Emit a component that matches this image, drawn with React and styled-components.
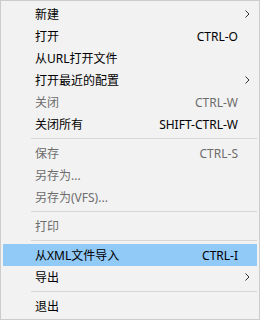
import React from 'react';
import styled, { createGlobalStyle } from 'styled-components';

const GlobalStyle = createGlobalStyle`
  body {
    margin: 0;
    background: #ffffff;
  }
`;

const Menu = styled.ul`
  box-sizing: border-box;
  width: 260px;
  height: 320px;
  margin: 0;
  padding: 2px;
  list-style: none;
  background: #f2f2f2;
  border: 1px solid #cccccc;
  font-family: "Noto Sans", "Noto Sans CJK SC", sans-serif;
  font-size: 12px;
`;

const Item = styled.li`
  display: grid;
  grid-template-columns: 1fr auto 19px;
  align-items: center;
  height: 22px;
  padding-left: 32px;
  color: ${p => (p.$disabled ? '#6d6d6d' : '#000000')};
  background: ${p => (p.$active ? '#91c9f7' : 'transparent')};
  cursor: default;
`;

const Label = styled.span`
  white-space: nowrap;
`;

const Shortcut = styled.span`
  white-space: nowrap;
  text-align: right;
`;

const Arrow = styled.span`
  display: flex;
  align-items: center;
  justify-content: flex-start;
  padding-left: 7px;
`;

const Separator = styled.li`
  height: 1px;
  margin: 3px 0 3px 28px;
  background: #d7d7d7;
`;

const Chevron = () => (
  <svg width="5" height="8" viewBox="0 0 5 8">
    <path d="M0.5 0.5 L4 4 L0.5 7.5" fill="none" stroke="#333" strokeWidth="1" />
  </svg>
);

const items = [
  { label: '新建', sub: true },
  { label: '打开', shortcut: 'CTRL-O' },
  { label: '从URL打开文件' },
  { label: '打开最近的配置', sub: true },
  { label: '关闭', shortcut: 'CTRL-W', disabled: true },
  { label: '关闭所有', shortcut: 'SHIFT-CTRL-W' },
  { sep: true },
  { label: '保存', shortcut: 'CTRL-S', disabled: true },
  { label: '另存为...', disabled: true },
  { label: '另存为(VFS)...', disabled: true },
  { sep: true },
  { label: '打印', disabled: true },
  { sep: true },
  { label: '从XML文件导入', shortcut: 'CTRL-I', active: true },
  { label: '导出', sub: true },
  { sep: true },
  { label: '退出' },
];

const App = () => (
  <>
    <GlobalStyle />
    <Menu>
      {items.map((it, i) =>
        it.sep ? (
          <Separator key={i} />
        ) : (
          <Item key={i} $disabled={it.disabled} $active={it.active}>
            <Label>{it.label}</Label>
            <Shortcut>{it.shortcut}</Shortcut>
            <Arrow>{it.sub && <Chevron />}</Arrow>
          </Item>
        )
      )}
    </Menu>
  </>
);

export default App;
